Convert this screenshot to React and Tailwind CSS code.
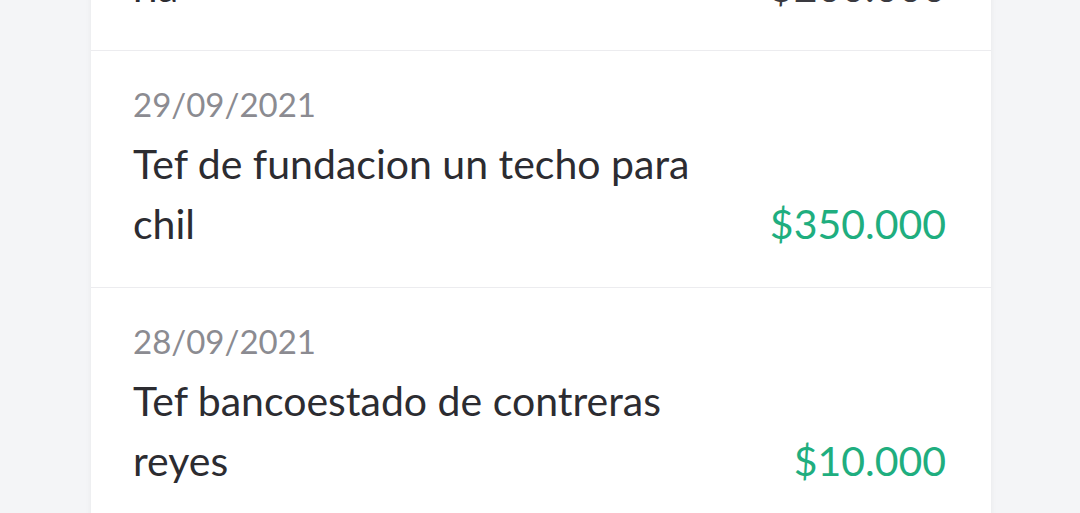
import React from 'react';

const rows = [
  { date: '27/09/2021', title: 'Tef a cuenta corriente de\nría', amount: '$200.000', credit: false },
  { date: '29/09/2021', title: 'Tef de fundacion un techo para chil', amount: '$350.000', credit: true },
  { date: '28/09/2021', title: 'Tef bancoestado de contreras reyes', amount: '$10.000', credit: true },
];

function Row({ date, title, amount, credit }) {
  return (
    <div className="flex items-end justify-between border-b border-[#ececef] pl-[42px] pr-[45px] pt-[23px] pb-[33px]">
      <div className="w-[600px]">
        <div className="text-[33px] leading-[60px] text-[#8b8b91]">{date}</div>
        <div className="whitespace-pre-line text-[41px] leading-[60px] text-[#2c2c31]">{title}</div>
      </div>
      <div className={`text-[41px] leading-[60px] ${credit ? 'text-[#1fae7f]' : 'text-[#3a3a40]'}`}>
        {amount}
      </div>
    </div>
  );
}

export default function App() {
  return (
    <div className="h-[513px] w-[1080px] overflow-hidden bg-[#f4f5f7]" style={{ fontFamily: 'Lato, "Noto Sans", sans-serif' }}>
      <div className="ml-[91px] mt-[-186px] w-[900px] bg-white shadow-[0_0_6px_rgba(0,0,0,0.06)]">
        {rows.map((r) => (
          <Row key={r.date} {...r} />
        ))}
      </div>
    </div>
  );
}
